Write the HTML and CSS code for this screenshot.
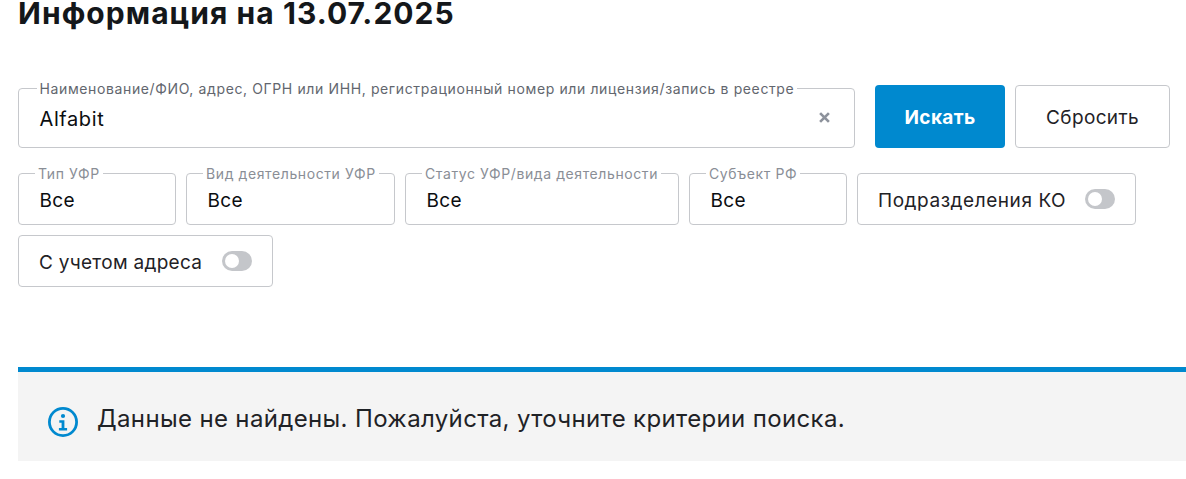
FILE: index.html
```html
<!DOCTYPE html>
<html lang="ru">
<head>
<meta charset="utf-8">
<title>Информация</title>
<link rel="stylesheet" href="styles.css">
</head>
<body>
<main class="page">
  <h1 class="title">Информация на 13.07.2025</h1>
  <form class="filters">
    <div class="row row-search">
      <div class="field field-query">
        <span class="label">Наименование/ФИО, адрес, ОГРН или ИНН, регистрационный номер или лицензия/запись в реестре</span>
        <span class="value value-query">Alfabit</span>
        <svg class="clear" viewBox="0 0 10 10" width="11" height="11" aria-hidden="true"><path d="M1 1l8 8M9 1l-8 8" stroke="#8d929c" stroke-width="2.4" fill="none"/></svg>
      </div>
      <button type="button" class="btn btn-primary">Искать</button>
      <button type="button" class="btn btn-secondary">Сбросить</button>
    </div>
    <div class="row row-select">
      <div class="field w-type"><span class="label label-sm">Тип УФР</span><span class="value">Все</span></div>
      <div class="field w-kind"><span class="label label-sm">Вид деятельности УФР</span><span class="value">Все</span></div>
      <div class="field w-status"><span class="label label-sm">Статус УФР/вида деятельности</span><span class="value">Все</span></div>
      <div class="field w-region"><span class="label label-sm">Субъект РФ</span><span class="value">Все</span></div>
      <div class="field toggle w-units"><span class="toggle-text">Подразделения КО</span><span class="switch"></span></div>
    </div>
    <div class="row row-select">
      <div class="field toggle w-addr"><span class="toggle-text">С учетом адреса</span><span class="switch"></span></div>
    </div>
  </form>
  <div class="notice">
    <svg class="notice-icon" viewBox="0 0 32 32" width="32" height="32" aria-hidden="true">
      <circle cx="16" cy="16" r="13.6" fill="none" stroke="#0089cf" stroke-width="2.8"/>
      <circle cx="16" cy="10" r="2.1" fill="#0089cf"/>
      <path d="M12.3 14.3h5.1v7.8h2.7v2.4h-8.2v-2.4h2.7v-5.4h-2.3z" fill="#0089cf"/>
    </svg>
    <span class="notice-text">Данные не найдены. Пожалуйста, уточните критерии поиска.</span>
  </div>
</main>
</body>
</html>
```
FILE: styles.css
```css
* { box-sizing: border-box; }
html, body { margin: 0; height: 100%; overflow: hidden; background: #fff; }
body { font-family: Inter, "Noto Sans", sans-serif; color: #1f2226; }
.page { padding-left: 18px; }
.title { margin: 0; height: 85px; font-size: 30px; line-height: 26px; font-weight: 700; color: #14171a; letter-spacing: 1.05px; }
.filters { display: flex; flex-direction: column; gap: 10px; }
.row { display: flex; gap: 10px; }
.row-search { height: 63px; align-items: flex-end; margin-bottom: 15px; }
.row-select { height: 52px; }
.field { position: relative; display: flex; align-items: center; border: 1px solid #c6c8cc; border-radius: 4px; background: #fff; padding-left: 20.5px; height: 52px; }
.field-query { width: 837px; height: 60px; margin-right: 10px; padding-top: 1px; }
.label { position: absolute; left: 17.5px; top: -8px; padding: 0 3px; background: #fff; font-size: 14px; line-height: 16px; letter-spacing: .62px; color: #62666e; white-space: nowrap; }
.label-sm { left: 16px; color: #8a8e96; top: -8px; letter-spacing: .6px; }
.value { font-size: 19px; line-height: 24px; letter-spacing: .3px; color: #0b0d10; }
.value-query { font-size: 20px; letter-spacing: .6px; }
.row-select .value { padding-top: 4px; }
.clear { position: absolute; right: 24px; top: 23px; }
.btn { height: 63px; border-radius: 4px; font-family: inherit; font-size: 19px; letter-spacing: .35px; cursor: pointer; padding-top: 3px; }
.btn-primary { width: 130px; border: 0; background: #0089cf; color: #fff; font-weight: 700; }
.btn-secondary { width: 155px; border: 1px solid #c6c8cc; background: #fff; color: #1f2226; }
.w-type { width: 158px; }
.w-kind { width: 209px; }
.w-status { width: 274px; }
.w-region { width: 158px; }
.w-units { width: 279px; }
.w-addr { width: 255px; }
.toggle { justify-content: space-between; padding-right: 20px; padding-left: 20px; }
.toggle-text { font-size: 19px; line-height: 24px; letter-spacing: .3px; white-space: nowrap; padding-top: 4px; }
.w-units .toggle-text { letter-spacing: .55px; }
.switch { position: relative; width: 30px; height: 20px; border-radius: 10px; background: #c4c6ca; flex: none; }
.switch::after { content: ""; position: absolute; left: 3px; top: 3px; width: 14px; height: 14px; border-radius: 50%; background: #fff; }
.notice { display: flex; align-items: center; gap: 18px; height: 94px; margin-top: 80px; padding-left: 29px; border-top: 5px solid #0089cf; background: #f4f4f4; }
.notice-icon { flex: none; margin-top: 11px; }
.notice-text { font-size: 24px; line-height: 30px; letter-spacing: .35px; color: #1f2226; margin-top: 4px; }
```
